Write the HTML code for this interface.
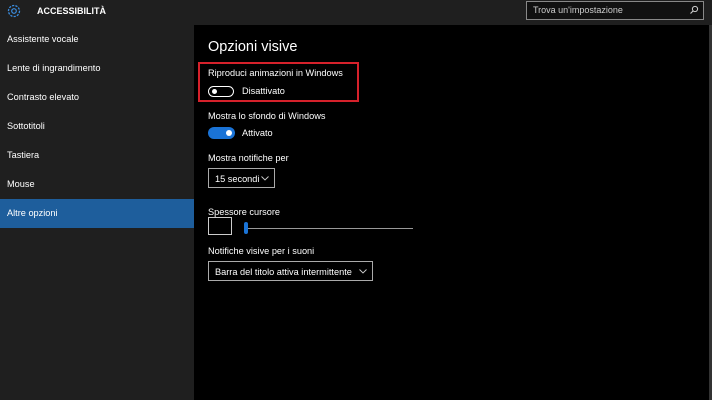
<!DOCTYPE html><html><head><style>
body{margin:0;width:712px;height:400px;background:#000;font-family:"Liberation Sans",sans-serif;color:#fff;position:relative;overflow:hidden;font-size:9.2px}
.a{position:absolute;white-space:nowrap}
#top{left:0;top:0;width:712px;height:25px;background:#1f1f1f}
#side{left:0;top:25px;width:194px;height:375px;background:#1f1f1f}
.it{left:7px;font-size:9.2px}
.t{font-size:9.2px}
</style></head><body>
<div class="a" id="top"></div>
<div class="a" id="side"></div>
<svg class="a" style="left:6px;top:3px" width="16" height="16" viewBox="0 0 16 16"><circle cx="8" cy="8" r="5.5" fill="none" stroke="#3a8de0" stroke-width="1.3" stroke-dasharray="2.2 1.2"/><circle cx="8" cy="8" r="2.3" fill="none" stroke="#3a8de0" stroke-width="1.2"/></svg>
<div class="a" style="left:37px;top:6px;font-weight:bold;font-size:9px">ACCESSIBILITÀ</div>
<div class="a" style="left:526px;top:1px;width:176px;height:17px;border:1px solid #888;background:#111"></div>
<div class="a" style="left:533px;top:5px;font-size:9px;color:#ccc">Trova un'impostazione</div>
<svg class="a" style="left:689px;top:5px" width="10" height="10" viewBox="0 0 10 10"><circle cx="6" cy="4" r="2.6" fill="none" stroke="#ccc" stroke-width="1"/><path d="M4.2 5.8L1.5 8.5" stroke="#ccc" stroke-width="1.1"/></svg>
<div class="a" style="left:709px;top:25px;width:3px;height:375px;background:#333"></div>
<div class="a it" style="top:34px">Assistente vocale</div>
<div class="a it" style="top:63px">Lente di ingrandimento</div>
<div class="a it" style="top:92px">Contrasto elevato</div>
<div class="a it" style="top:121px">Sottotitoli</div>
<div class="a it" style="top:150px">Tastiera</div>
<div class="a it" style="top:179px">Mouse</div>
<div class="a" style="left:0;top:199px;width:194px;height:29px;background:#1e5e9c"></div>
<div class="a it" style="top:208px">Altre opzioni</div>
<div class="a" style="left:208px;top:39px;font-size:14.5px">Opzioni visive</div>
<div class="a" style="left:198px;top:62px;width:161px;height:40px;border:2px solid #d6212b;box-sizing:border-box"></div>
<div class="a t" style="left:208px;top:68px">Riproduci animazioni in Windows</div>
<div class="a" style="left:208px;top:86px;width:26px;height:11px;border:1.5px solid #fff;border-radius:7px;box-sizing:border-box"></div>
<div class="a" style="left:212px;top:89px;width:5px;height:5px;border-radius:50%;background:#fff"></div>
<div class="a t" style="left:242px;top:86px">Disattivato</div>
<div class="a t" style="left:208px;top:111px">Mostra lo sfondo di Windows</div>
<div class="a" style="left:208px;top:127px;width:27px;height:12px;border-radius:7px;background:#1a73d6"></div>
<div class="a" style="left:226px;top:130px;width:6px;height:6px;border-radius:50%;background:#fff"></div>
<div class="a t" style="left:242px;top:128px">Attivato</div>
<div class="a t" style="left:208px;top:153px">Mostra notifiche per</div>
<div class="a" style="left:208px;top:168px;width:67px;height:20px;border:1px solid #aaa;box-sizing:border-box"></div>
<div class="a t" style="left:215px;top:174px">15 secondi</div>
<svg class="a" style="left:261px;top:176px" width="8" height="5" viewBox="0 0 8 5"><path d="M0.5 0.5L4 4L7.5 0.5" fill="none" stroke="#ccc" stroke-width="0.9"/></svg>
<div class="a t" style="left:208px;top:207px">Spessore cursore</div>
<div class="a" style="left:208px;top:217px;width:24px;height:18px;border:1px solid #ccc;box-sizing:border-box"></div>
<div class="a" style="left:244px;top:228px;width:169px;height:1px;background:#999"></div>
<div class="a" style="left:244px;top:222px;width:4px;height:12px;border-radius:2px;background:#1a73d6"></div>
<div class="a t" style="left:208px;top:246px">Notifiche visive per i suoni</div>
<div class="a" style="left:208px;top:261px;width:165px;height:20px;border:1px solid #aaa;box-sizing:border-box"></div>
<div class="a t" style="left:215px;top:267px">Barra del titolo attiva intermittente</div>
<svg class="a" style="left:359px;top:269px" width="8" height="5" viewBox="0 0 8 5"><path d="M0.5 0.5L4 4L7.5 0.5" fill="none" stroke="#ccc" stroke-width="0.9"/></svg>
</body></html>
